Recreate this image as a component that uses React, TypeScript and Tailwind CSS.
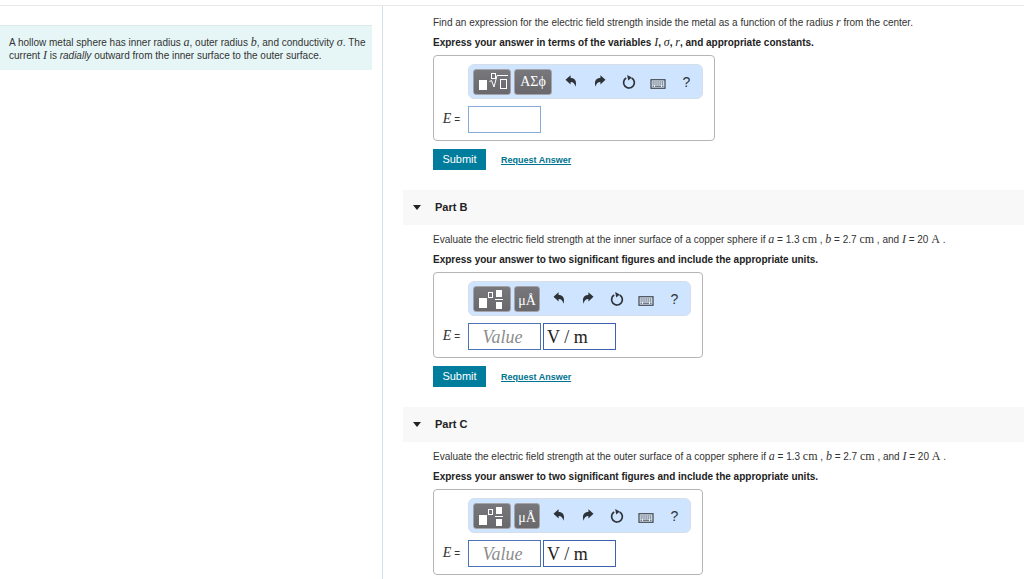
import { useState } from "react";
import type { ReactNode } from "react";

const UndoIcon = () => (
  <svg width="12" height="12" viewBox="0 0 12 12" fill="#2d3338" className="mb-0.5">
    <path d="M0.5 4.8 L5.6 0.2 V3 C9.6 3 12.3 5.8 10.4 11.8 C9.8 8.4 8.4 7 5.6 6.9 V9.4 Z" />
  </svg>
);

const RedoIcon = () => (
  <svg width="12" height="12" viewBox="0 0 12 12" fill="#2d3338" className="mb-0.5">
    <path d="M11.5 4.8 L6.4 0.2 V3 C2.4 3 -0.3 5.8 1.6 11.8 C2.2 8.4 3.6 7 6.4 6.9 V9.4 Z" />
  </svg>
);

const ResetIcon = () => (
  <svg width="14" height="14" viewBox="0 0 14 14">
    <path
      d="M9.6 2.9 A5.4 5.4 0 1 1 4.2 3"
      fill="none"
      stroke="#2d3338"
      strokeWidth="1.7"
    />
    <path d="M5.2 0 L9.8 2.4 L6.2 5.4 Z" fill="#2d3338" />
  </svg>
);

const KeyboardIcon = () => (
  <svg width="16" height="10" viewBox="0 0 16 10" className="mt-1">
    <rect x="1" y="0.75" width="14" height="8.5" fill="#e3effc" stroke="#3c444c" strokeWidth="1.2" />
    <path d="M2.5 3 H13.5 M2.5 5 H13.5" stroke="#3c444c" strokeWidth="1" strokeDasharray="1.3 0.6" />
    <path d="M2.5 7.2 H4 M5 7.2 H11 M12 7.2 H13.5" stroke="#3c444c" strokeWidth="1" />
  </svg>
);

const RootTemplateIcon = () => (
  <svg width="32" height="19" viewBox="0 0 32 19" fill="none" stroke="#fff" className="shrink-0">
    <rect x="3" y="8" width="8" height="10" fill="#fff" stroke="none" />
    <rect x="15.5" y="1.5" width="4" height="5" />
    <path d="M13.5 9.5 L15.5 8.5 L18 15 L21 3.5 H32" />
    <rect x="24.5" y="7.5" width="6" height="9" />
  </svg>
);

const FractionTemplateIcon = () => (
  <svg width="30" height="20" viewBox="0 0 30 20" fill="#fff" className="shrink-0">
    <rect x="2" y="9" width="8" height="10" />
    <rect x="11.5" y="3.5" width="4" height="5" fill="none" stroke="#fff" />
    <rect x="19" y="1" width="6" height="7" />
    <rect x="18" y="10" width="8" height="1" />
    <rect x="19" y="13" width="6" height="7" />
  </svg>
);

const ICON_TOOLS = [
  { label: "Undo", icon: <UndoIcon /> },
  { label: "Redo", icon: <RedoIcon /> },
  { label: "Reset", icon: <ResetIcon /> },
  { label: "Keyboard shortcuts", icon: <KeyboardIcon /> },
  { label: "Help", icon: <span className="text-sm leading-none">?</span> },
];

function Var({ children }: { children: ReactNode }) {
  return (
    <i className="font-['Liberation_Serif',serif] text-xs leading-none font-normal">{children}</i>
  );
}

function Unit({ children }: { children: ReactNode }) {
  return (
    <span className="font-['Liberation_Serif',serif] text-xs leading-none">{children}</span>
  );
}

function Toolbar({ units }: { units?: boolean }) {
  const dark =
    "flex h-[26px] items-center justify-center rounded-[3px] border border-[#a3a3a8] bg-linear-to-b from-[#77777c] to-[#69696d] font-['Liberation_Serif',serif] text-white";

  return (
    <div className="flex h-[35px] items-center rounded-md border border-[#d6dfe9] bg-[#cfe5ff] pr-px pl-1">
      <button aria-label="Templates" className={`${dark} w-[38px]`}>
        {units ? <FractionTemplateIcon /> : <RootTemplateIcon />}
      </button>
      {units ? (
        <button aria-label="Units" className={`${dark} ml-[3px] w-[26px] pt-1 text-sm`}>
          μÅ
        </button>
      ) : (
        <button aria-label="Symbols" className={`${dark} ml-[3px] w-[38px] text-sm`}>
          ΑΣϕ
        </button>
      )}
      <div className="ml-1 flex">
        {ICON_TOOLS.map((tool) => (
          <button
            key={tool.label}
            aria-label={tool.label}
            className="flex h-6 w-[29px] items-center justify-center text-[#2d3338]"
          >
            {tool.icon}
          </button>
        ))}
      </div>
    </div>
  );
}

function AnswerBox({ id, units }: { id: string; units?: boolean }) {
  const field =
    "h-[27px] w-[73px] border bg-white font-['Liberation_Serif',serif] text-lg text-[#222] outline-none";

  return (
    <div className="mt-[2px] w-fit rounded border border-[#b5b5b5] pt-2 pr-[11px] pb-[7px]">
      <div className="pl-[34px]">
        <Toolbar units={units} />
      </div>
      <div className="mt-[7px] flex items-center">
        <label htmlFor={id} className="w-[34px] pr-2 text-right leading-4">
          <i className="font-['Liberation_Serif',serif] text-sm leading-none">E</i> =
        </label>
        {units ? (
          <div className="flex gap-[2px]">
            <input
              id={id}
              placeholder="Value"
              className={`${field} border-[#4c74b8] pr-1 text-center italic placeholder:text-[#8c8c8c]`}
            />
            <input
              aria-label="Units"
              defaultValue="V / m"
              className={`${field} border-[#3f62ae] px-[3px]`}
            />
          </div>
        ) : (
          <input id={id} className={`${field} border-[#86a9d6] px-1`} />
        )}
      </div>
    </div>
  );
}

function Actions() {
  return (
    <div className="mt-2 flex h-[21px] items-center">
      <button className="h-[21px] w-[53px] bg-[#007c9c] text-[11px] text-white">Submit</button>
      <a href="#answer" className="ml-[15px] text-[9px] leading-3 font-bold text-[#00738f] underline">
        Request Answer
      </a>
    </div>
  );
}

function PartHeader({ name, open, onToggle }: { name: string; open: boolean; onToggle: () => void }) {
  return (
    <h2 className="-ml-[30px] bg-[#f8f8f8]">
      <button
        onClick={onToggle}
        aria-expanded={open}
        className="flex h-[35px] w-full items-center gap-[14px] pl-[10px] text-[11px] font-bold text-[#222]"
      >
        <svg width="8" height="5" viewBox="0 0 8 5">
          <path d="M0 0 H8 L4 5 Z" fill="#222" />
        </svg>
        Part {name}
      </button>
    </h2>
  );
}

function NumericPart({ name, surface, actions }: { name: string; surface: string; actions?: boolean }) {
  const [open, setOpen] = useState(true);

  return (
    <section className="mt-5">
      <PartHeader name={name} open={open} onToggle={() => setOpen(!open)} />
      {open && (
        <div className="pt-[5px]">
          <p className="leading-5">
            Evaluate the electric field strength at the {surface} surface of a copper sphere if{" "}
            <Var>a</Var> = 1.3 <Unit>cm</Unit> , <Var>b</Var> = 2.7 <Unit>cm</Unit> , and{" "}
            <Var>I</Var> = 20 <Unit>A</Unit> .
          </p>
          <p className="leading-5 font-bold text-[#222]">
            Express your answer to two significant figures and include the appropriate units.
          </p>
          <AnswerBox id={`answer-${name}`} units />
          {actions && <Actions />}
        </div>
      )}
    </section>
  );
}

export default function App() {
  return (
    <div className="flex min-h-screen flex-col bg-white pt-[5px] font-['Liberation_Sans',Arial,sans-serif] text-[10px] text-[#333]">
      <div className="flex flex-1 border-t border-[#e6e9ea]">
        <aside className="w-[383px] shrink-0 border-r border-[#d3dfe4] pt-[19px] pr-[10px]">
          <p className="border-t border-[#dbe9eb] bg-[#e6f6f6] pt-[10px] pr-1 pb-2 pl-[9px] leading-[13px]">
            A hollow metal sphere has inner radius <Var>a</Var>, outer radius <Var>b</Var>, and
            conductivity <Var>σ</Var>. The current <Var>I</Var> is <em>radially</em> outward from the
            inner surface to the outer surface.
          </p>
        </aside>

        <main className="min-w-0 flex-1 pt-[7px] pl-[50px]">
          <section>
            <p className="leading-5">
              Find an expression for the electric field strength inside the metal as a function of
              the radius <Var>r</Var> from the center.
            </p>
            <p className="leading-5 font-bold text-[#222]">
              Express your answer in terms of the variables <Var>I</Var>, <Var>σ</Var>, <Var>r</Var>,
              and appropriate constants.
            </p>
            <AnswerBox id="answer-A" />
            <Actions />
          </section>
          <NumericPart name="B" surface="inner" actions />
          <NumericPart name="C" surface="outer" />
        </main>
      </div>
    </div>
  );
}
